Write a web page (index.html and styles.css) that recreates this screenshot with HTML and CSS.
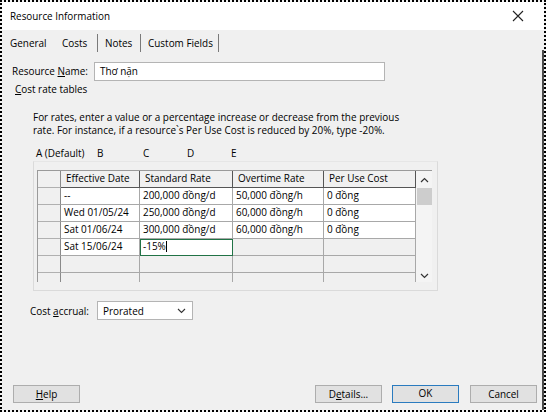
FILE: index.html
```html
<!DOCTYPE html>
<html>
<head>
<meta charset="utf-8">
<link rel="stylesheet" href="styles.css">
</head>
<body>
<div class="dialog">
  <div class="titlebar">
    <span class="title">Resource Information</span>
    <svg class="close" width="12" height="12" viewBox="0 0 12 12"><path d="M1 1L11 11M11 1L1 11" stroke="#222" stroke-width="1.1" fill="none"/></svg>
  </div>
  <div class="tabs">
    <span class="tab t-general">General</span>
    <span class="tab t-costs">Costs</span>
    <span class="sep"></span>
    <span class="tab t-notes">Notes</span>
    <span class="sep"></span>
    <span class="tab t-custom">Custom Fields</span>
    <span class="sep"></span>
  </div>
  <div class="namerow">
    <span class="namelabel">Resource <u>N</u>ame:</span>
    <div class="nameinput">Thơ nặn</div>
  </div>
  <div class="costlabel"><u>C</u>ost rate tables</div>
  <p class="help">For rates, enter a value or a percentage increase or decrease from the previous<br>rate. For instance, if a resource`s Per Use Cost is reduced by 20%, type -20%.</p>
  <div class="subtabs">
    <span class="st st-a">A (Default)</span>
    <span class="st st-b">B</span>
    <span class="st st-c">C</span>
    <span class="st st-d">D</span>
    <span class="st st-e">E</span>
  </div>
  <div class="panel">
    <div class="grid">
      <div class="c rh hd"></div>
      <div class="c hd">Effective Date</div>
      <div class="c hd">Standard Rate</div>
      <div class="c hd">Overtime Rate</div>
      <div class="c hd">Per Use Cost</div>
      <div class="scroll">
        <svg class="chev" width="9" height="6" viewBox="0 0 9 6"><path d="M1 5L4.5 1.5L8 5" stroke="#333" stroke-width="1.2" fill="none"/></svg>
        <div class="thumb"></div>
        <div class="track"></div>
        <svg class="chev" width="9" height="6" viewBox="0 0 9 6"><path d="M1 1L4.5 4.5L8 1" stroke="#333" stroke-width="1.2" fill="none"/></svg>
      </div>

      <div class="c rh"></div>
      <div class="c w">--</div>
      <div class="c w">200,000 đồng/d</div>
      <div class="c w">50,000 đồng/h</div>
      <div class="c w">0 đồng</div>

      <div class="c rh"></div>
      <div class="c w">Wed 01/05/24</div>
      <div class="c w">250,000 đồng/d</div>
      <div class="c w">60,000 đồng/h</div>
      <div class="c w">0 đồng</div>

      <div class="c rh"></div>
      <div class="c w">Sat 01/06/24</div>
      <div class="c w">300,000 đồng/d</div>
      <div class="c w">60,000 đồng/h</div>
      <div class="c w">0 đồng</div>

      <div class="c rh"></div>
      <div class="c w">Sat 15/06/24</div>
      <div class="c sel">-15%<span class="caret"></span></div>
      <div class="c"></div>
      <div class="c"></div>

      <div class="c rh"></div>
      <div class="c"></div>
      <div class="c"></div>
      <div class="c"></div>
      <div class="c"></div>

      <div class="c rh"></div>
      <div class="c"></div>
      <div class="c"></div>
      <div class="c"></div>
      <div class="c"></div>
    </div>
  </div>
  <div class="accrual">
    <span class="acclabel">Cost <u>a</u>ccrual:</span>
    <div class="select">
      <span>Prorated</span>
      <svg width="9" height="6" viewBox="0 0 9 6"><path d="M1 1L4.5 4.5L8 1" stroke="#333" stroke-width="1.1" fill="none"/></svg>
    </div>
  </div>
  <div class="buttons">
    <div class="btn help-btn"><u>H</u>elp</div>
    <div class="spacer"></div>
    <div class="btn">D<u>e</u>tails...</div>
    <div class="btn ok">OK</div>
    <div class="btn cancel">Cancel</div>
  </div>
</div>
</body>
</html>
```

FILE: styles.css
```css
html, body {
  margin: 0;
  padding: 0;
}
body {
  font-family: "Open Sans", "Noto Sans", sans-serif;
  font-size: 9.95px;
  color: #000;
  width: 546px;
  height: 412px;
  overflow: hidden;
}
.dialog {
  box-sizing: border-box;
  width: 546px;
  height: 412px;
  border: 2px dotted #000;
  background: #f0f0f0;
  display: flex;
  flex-direction: column;
  position: relative;
}
.dialog::after {
  content: "";
  position: absolute;
  right: 0;
  top: 48px;
  bottom: 0;
  width: 2px;
  background: #4a4a4a;
}
.titlebar {
  height: 28px;
  background: #fff;
  display: flex;
  align-items: center;
  padding-left: 8px;
  padding-right: 20px;
  font-size: 9.9px;
}
.title {
  flex: 1;
}
.tabs {
  height: 25px;
  display: flex;
  align-items: center;
  padding-left: 8px;
}
.tab {
  white-space: nowrap;
}
.t-general { width: 52px; }
.t-costs { width: 35px; }
.t-notes { margin-left: 7px; width: 35px; }
.t-custom { margin-left: 7px; width: 70px; }
.sep {
  width: 1px;
  height: 18px;
  background: #7a7a7a;
}
.namerow {
  height: 27px;
  display: flex;
  align-items: flex-start;
  padding-left: 10px;
  padding-top: 7px;
  box-sizing: border-box;
}
.namelabel {
  width: 82px;
  line-height: 19px;
}
.nameinput {
  box-sizing: border-box;
  width: 291px;
  height: 19px;
  background: #fff;
  border: 1px solid #b4b4b4;
  line-height: 17px;
  padding-left: 5px;
}
.costlabel {
  height: 14px;
  line-height: 14px;
  padding-left: 13px;
}
.help {
  margin: 15px 0 0 31px;
  line-height: 13px;
  height: 26px;
  white-space: nowrap;
}
.subtabs {
  margin-top: 8px;
  height: 16px;
  line-height: 16px;
  display: flex;
  padding-left: 34px;
}
.st-a { width: 61px; }
.st-b { width: 46px; }
.st-c { width: 44px; }
.st-d { width: 44px; }
.panel {
  box-sizing: border-box;
  margin-left: 31px;
  width: 405px;
  height: 130px;
  border: 1px solid #dadada;
  border-top-color: #e6e6e6;
  padding: 8px 0 0 3px;
}
.grid {
  display: grid;
  width: 395px;
  height: 112px;
  grid-template-columns: 23px 79px 93px 91px 92px 17px;
  grid-template-rows: repeat(6, 17px) 10px;
  overflow: hidden;
  border-left: 1px solid #9a9a9a;
  border-top: 1px solid #9a9a9a;
  box-sizing: border-box;
}
.c {
  box-sizing: border-box;
  border-right: 1px solid #a8a8a8;
  border-bottom: 1px solid #a8a8a8;
  padding-left: 3px;
  line-height: 15px;
  white-space: nowrap;
  overflow: hidden;
  position: relative;
}
.hd {
  border-right: 1px solid #555;
  border-bottom: 1px solid #555;
  padding-left: 5px;
  background: #f0f0f0;
}
.rh {
  background: #f0f0f0;
  border-right: 1px solid #8a8a8a;
  border-bottom: 1px solid #b0b0b0;
}
.w {
  background: #fff;
}
.sel {
  background: #fff;
  border: 1.5px solid #217346;
  padding-left: 2px;
  line-height: 13px;
}
.caret {
  display: inline-block;
  width: 1px;
  height: 11px;
  background: #000;
  vertical-align: -2px;
}
.scroll {
  grid-column: 6;
  grid-row: 1 / span 7;
  display: flex;
  flex-direction: column;
  align-items: center;
  background: #f4f4f4;
  height: 112px;
}
.scroll .chev {
  margin-top: 6px;
  flex: none;
}
.thumb {
  margin-top: 5px;
  width: 15px;
  height: 17px;
  background: #cdcdcd;
}
.track {
  flex: 1;
}
.scroll .chev:last-child {
  margin-top: 0;
  margin-bottom: 4px;
}
.accrual {
  margin-top: 10px;
  display: flex;
  align-items: center;
  padding-left: 28px;
  height: 19px;
}
.acclabel {
  width: 67px;
}
.select {
  box-sizing: border-box;
  width: 96px;
  height: 19px;
  background: #fff;
  border: 1px solid #b4b4b4;
  display: flex;
  align-items: center;
  justify-content: space-between;
  padding: 0 6px 0 5px;
}
.buttons {
  margin-top: auto;
  margin-bottom: 7px;
  display: flex;
  padding: 0 7px 0 11px;
}
.spacer {
  flex: 1;
}
.btn {
  box-sizing: border-box;
  width: 67px;
  height: 18px;
  background: #e1e1e1;
  border: 1px solid #adadad;
  text-align: center;
  line-height: 16px;
}
.ok {
  margin-left: 10px;
  border: 1.5px solid #2a7bbf;
  line-height: 15px;
}
.cancel {
  margin-left: 11px;
}
```
